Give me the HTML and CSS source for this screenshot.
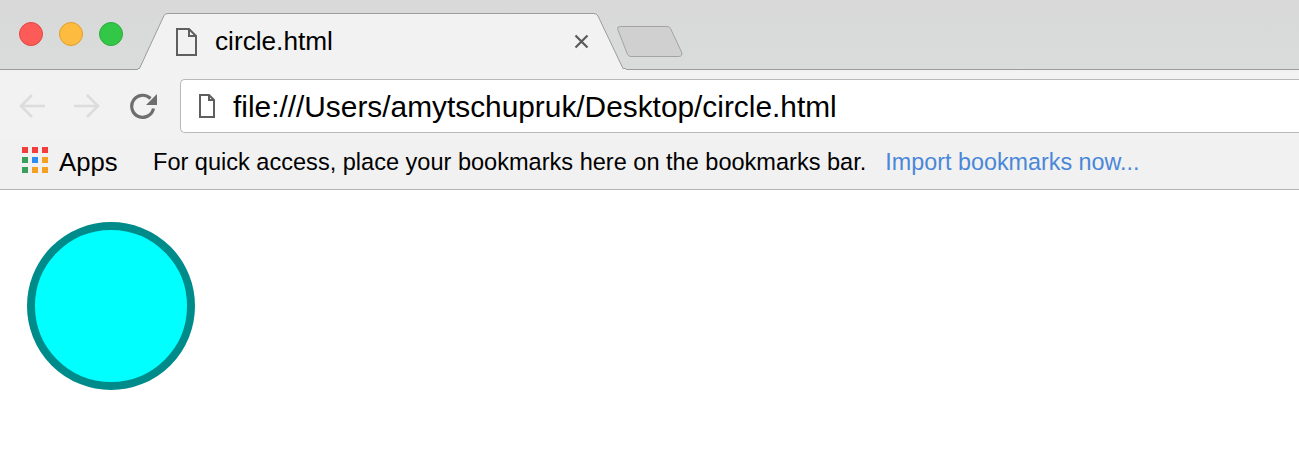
FILE: index.html
```
<!DOCTYPE html>
<html lang="en">
<head>
<meta charset="utf-8">
<title>circle.html</title>
<link rel="stylesheet" href="styles.css">
</head>
<body>
<header class="chrome">
  <div class="tabstrip">
    <div class="lights">
      <span class="light red"></span>
      <span class="light yellow"></span>
      <span class="light green"></span>
    </div>
    <div class="tab">
      <svg class="tab-bg" width="488" height="57" viewBox="0 0 488 57">
        <path d="M0 56 L1.500 55.500 L26 2.500 Q27.500 0.500 30 0.500 L456 0.500 Q458.500 0.500 460 3 L485 55.500 L488 56 L488 57 L0 57 Z" fill="#f2f2f2"/>
        <path d="M0 55.500 L1.500 55.500 L26 2.500 Q27.500 0.500 30 0.500 L456 0.500 Q458.500 0.500 460 3 L485 55.500 L488 55.500" fill="none" stroke="#9c9c9c" stroke-width="1"/>
      </svg>
      <svg class="tab-icon" width="21" height="28" viewBox="0 0 21 28">
        <path d="M1 1 H13 L20 8 V27 H1 Z M13 1 V8 H20" fill="none" stroke="#5f5f5f" stroke-width="2"/>
      </svg>
      <span class="tab-title">circle.html</span>
      <svg class="tab-close" width="15" height="15" viewBox="0 0 15 15">
        <path d="M1.500 1.500 L13.500 13.500 M13.500 1.500 L1.500 13.500" stroke="#5a5a5a" stroke-width="2.200" fill="none"/>
      </svg>
    </div>
    <svg class="newtab" width="66" height="32" viewBox="0 0 66 32">
      <path d="M3 0.500 H50 Q52.500 0.500 53.500 2.500 L64.500 26 Q66 30.500 61.500 30.500 H14 Q11.500 30.500 10.500 28.500 L0.800 3.500 Q0 0.500 3 0.500 Z" fill="#d0d0d0" stroke="#a3a3a3" stroke-width="1"/>
    </svg>
  </div>
  <div class="toolbar">
    <div class="nav">
      <svg class="nav-icon" width="28" height="26" viewBox="0 0 28 26">
        <path d="M27 13 H3 M14 2 L3 13 L14 24" fill="none" stroke="#dcdcdc" stroke-width="2.600"/>
      </svg>
      <svg class="nav-icon" width="28" height="26" viewBox="0 0 28 26">
        <path d="M1 13 H25 M14 2 L25 13 L14 24" fill="none" stroke="#dcdcdc" stroke-width="2.600"/>
      </svg>
      <svg class="nav-icon refresh" width="28" height="28" viewBox="0 0 28 28">
        <path d="M23.500 16.500 A11 11 0 1 1 20.500 6.500" fill="none" stroke="#6e6e6e" stroke-width="3.200"/>
        <path d="M27 2 V13 H16 Z" fill="#6e6e6e"/>
      </svg>
    </div>
    <div class="omnibox">
      <svg class="omni-icon" width="16" height="24" viewBox="0 0 16 24">
        <path d="M1 1 H10 L15 6 V23 H1 Z M10 1 V6 H15" fill="none" stroke="#5f5f5f" stroke-width="2"/>
      </svg>
      <span class="url">file:///Users/amytschupruk/Desktop/circle.html</span>
    </div>
  </div>
  <div class="bookmarks">
    <div class="apps">
      <svg class="apps-icon" width="27" height="27" viewBox="0 0 27 27">
        <rect class="c-red" x="0" y="0" width="6" height="6"/>
        <rect class="c-red" x="10" y="0" width="6" height="6"/>
        <rect class="c-red" x="20" y="0" width="6" height="6"/>
        <rect class="c-green" x="0" y="10" width="6" height="6"/>
        <rect class="c-blue" x="10" y="10" width="6" height="6"/>
        <rect class="c-orange" x="20" y="10" width="6" height="6"/>
        <rect class="c-green" x="0" y="20" width="6" height="6"/>
        <rect class="c-orange" x="10" y="20" width="6" height="6"/>
        <rect class="c-orange" x="20" y="20" width="6" height="6"/>
      </svg>
      <span class="apps-label">Apps</span>
    </div>
    <span class="hint">For quick access, place your bookmarks here on the bookmarks bar.</span>
    <a class="import" href="#">Import bookmarks now...</a>
  </div>
</header>
<main class="content">
  <div class="circle"></div>
</main>
</body>
</html>
```
FILE: styles.css
```
* { box-sizing: border-box; }
html, body { margin: 0; padding: 0; }
body {
  width: 1299px;
  height: 464px;
  overflow: hidden;
  background: #fff;
  font-family: "Liberation Sans", Arial, sans-serif;
  color: #000;
}
.tabstrip {
  height: 70px;
  display: flex;
  align-items: flex-end;
  background: linear-gradient(#d8d8d8, #dadcdc);
  border-bottom: 1px solid #9c9c9c;
}
.lights {
  width: 138px;
  height: 69px;
  flex: none;
  display: flex;
  gap: 16px;
  padding: 22px 0 0 19px;
}
.light {
  width: 24px;
  height: 24px;
  border-radius: 50%;
  border: 1px solid;
}
.red { background: #fc5b57; border-color: #e2463f; }
.yellow { background: #fdbc40; border-color: #e09e2c; }
.green { background: #33c748; border-color: #2aac39; }
.tab {
  position: relative;
  width: 488px;
  height: 57px;
  flex: none;
  display: flex;
  align-items: center;
  padding: 0 0 0 38px;
  margin-bottom: -1px;
}
.tab-bg { position: absolute; left: 0; top: 0; }
.tab-icon { position: relative; flex: none; }
.tab-title {
  position: relative;
  margin: 0 0 1px 18px;
  width: 359px;
  font-size: 26.2px;
  line-height: 30px;
  white-space: nowrap;
}
.tab-close { position: relative; flex: none; }
.newtab { flex: none; margin: 0 0 11px -9px; }
.toolbar {
  height: 71px;
  background: #f2f2f2;
  display: flex;
  padding: 9px 0 0 18px;
}
.nav {
  width: 162px;
  flex: none;
  height: 53px;
  display: flex;
  align-items: center;
  gap: 27px;
}
.refresh { margin-left: 2px; }
.omnibox {
  flex: 1;
  height: 54px;
  background: #fff;
  border: 1px solid #b9b9b9;
  border-right: none;
  border-radius: 5px 0 0 5px;
  display: flex;
  align-items: center;
  padding-left: 18px;
}
.url {
  margin: 2px 0 0 18px;
  font-size: 29.85px;
  line-height: 32px;
  white-space: nowrap;
}
.bookmarks {
  height: 50px;
  margin-top: -1px;
  background: #f1f1f1;
  border-bottom: 1px solid #b5b5b5;
  display: flex;
  align-items: center;
  padding: 0 0 4px 22px;
  font-size: 23.55px;
  white-space: nowrap;
}
.apps { display: flex; align-items: center; gap: 10px; width: 131px; flex: none; }
.apps-icon { margin-bottom: 4px; }
.apps-label { font-size: 25.7px; }
.c-red { fill: #f33c3c; }
.c-green { fill: #3a9f5b; }
.c-blue { fill: #2d8df0; }
.c-orange { fill: #f4a024; }
.import { margin-left: 19px; font-size: 23.35px; color: #4a87d8; text-decoration: none; }
.content { padding: 32px 0 0 27px; }
.circle {
  width: 168px;
  height: 168px;
  border-radius: 50%;
  background: #00ffff;
  border: 8px solid #008b8b;
}
```
